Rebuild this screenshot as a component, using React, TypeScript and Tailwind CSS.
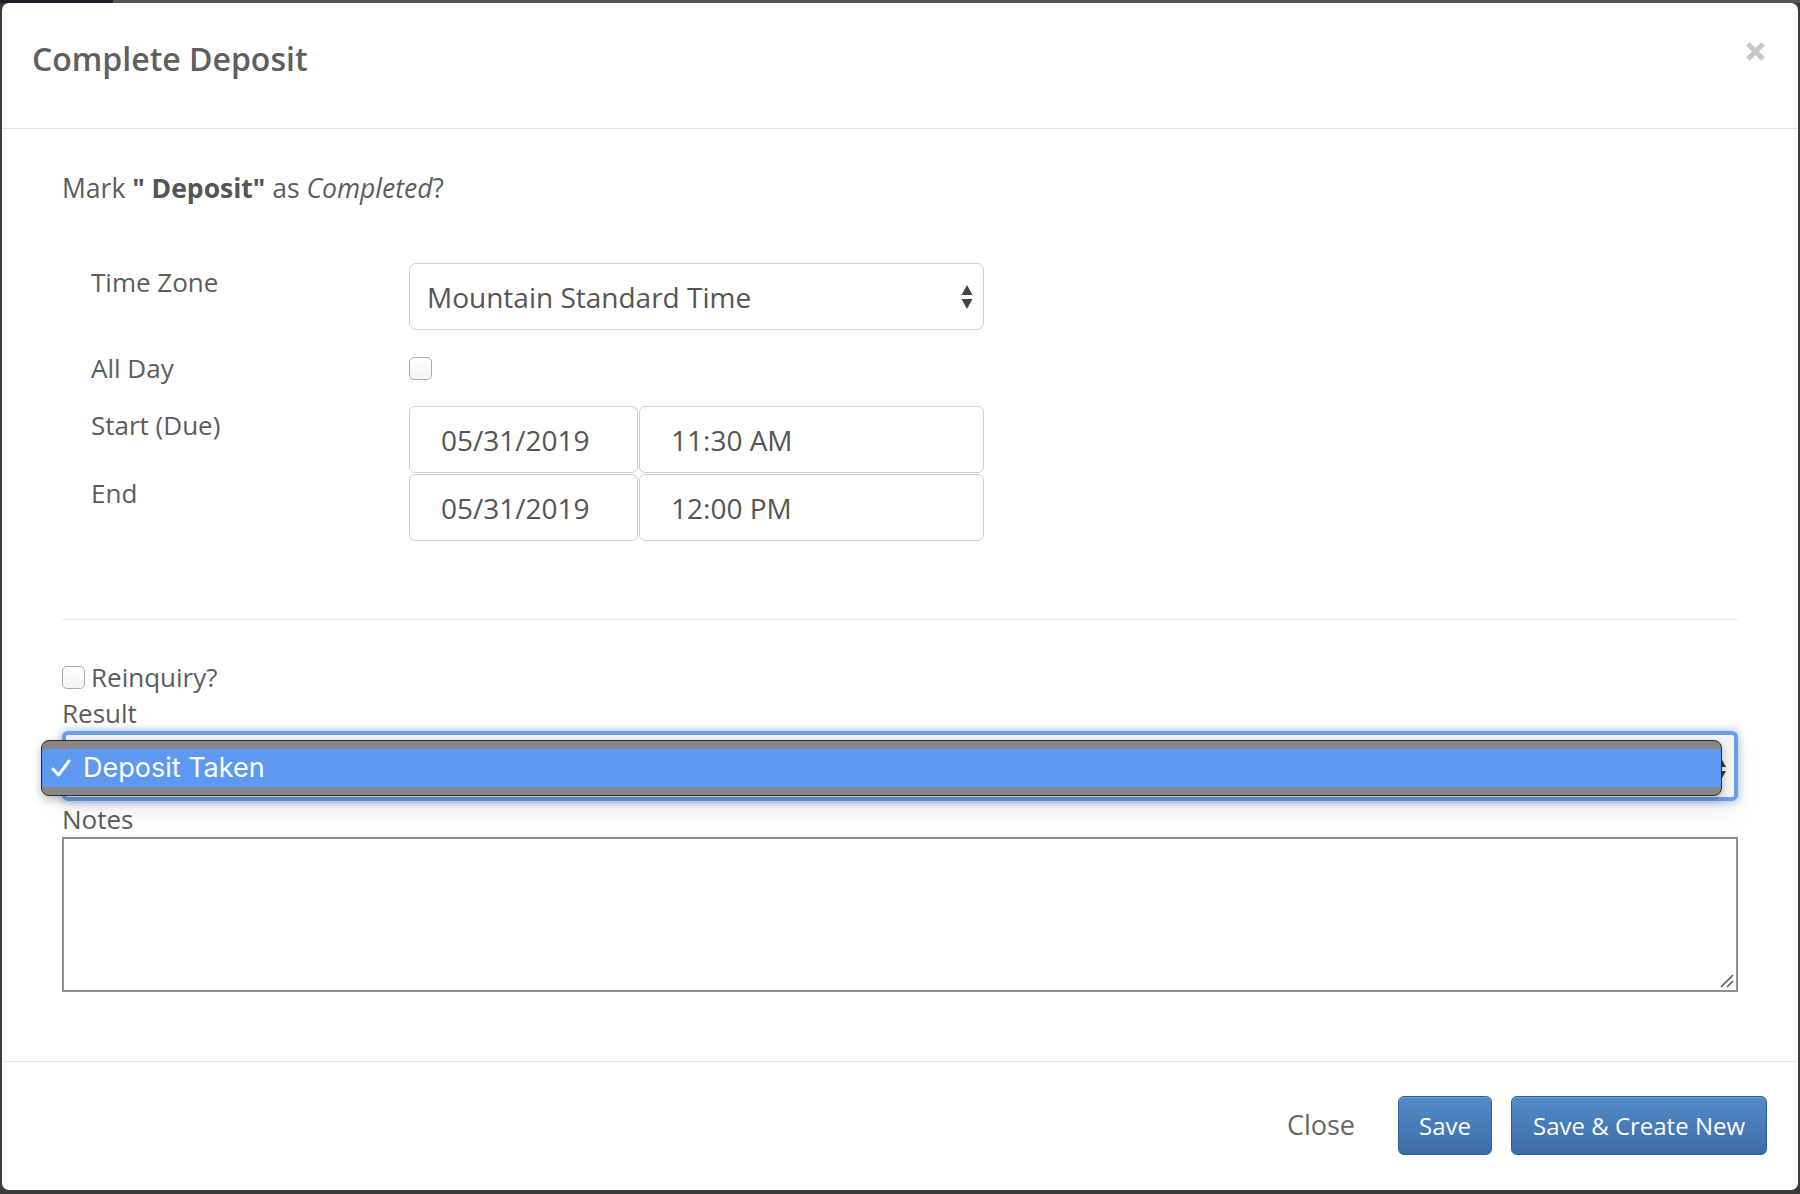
import React from 'react';

const font = { fontFamily: '"Open Sans", "Liberation Sans", sans-serif' };

const Arrows = ({ className }: { className?: string }) => (
  <svg width="12" height="26" viewBox="0 0 12 26" className={className}>
    <path d="M6 1 L11.5 11 L0.5 11 Z" fill="#444" />
    <path d="M6 25 L11.5 15 L0.5 15 Z" fill="#444" />
  </svg>
);

const Checkbox = () => (
  <span className="inline-block w-[23px] h-[23px] rounded-[5px] border border-[#a8a8a8] bg-gradient-to-b from-white to-[#f4f4f4] shrink-0" />
);

const FormRow = ({ label, children, className }: { label: string; children: React.ReactNode; className?: string }) => (
  <div className={`flex ${className ?? ''}`}>
    <div className="w-[347px] pl-[29px] text-[26px] leading-[38px] text-[#5c5c5c]">{label}</div>
    <div>{children}</div>
  </div>
);

const TextBox = ({ value, width }: { value: string; width: string }) => (
  <div className={`${width} h-[67px] border border-[#cfcfcf] rounded-[6px] flex items-center pl-[31px] text-[28px] text-[#555]`}>
    {value}
  </div>
);

export default function App() {
  return (
    <div className="w-[1800px] h-[1194px] bg-[#3b3b3b] overflow-hidden" style={font}>
      <div className="flex h-[3px]">
        <div className="w-[113px] bg-[#1b2027]" />
        <div className="flex-1 bg-[#565656]" />
      </div>
      <div className="ml-[2px] w-[1796px] h-[1187px] bg-white rounded-[7px] flex flex-col relative">
        {/* header */}
        <div className="h-[126px] pt-[33px] px-[30px] border-b border-[#e5e5e5] relative">
          <h4 className="text-[32px] leading-[45px] font-semibold text-[#5f5f5f]">Complete Deposit</h4>
          <button className="absolute right-[33px] top-[39px] w-[19px] h-[19px]">
            <svg width="19" height="19" viewBox="0 0 19 19">
              <path d="M2 2 L17 17 M17 2 L2 17" stroke="#c8c8c8" strokeWidth="5" />
            </svg>
          </button>
        </div>

        {/* body */}
        <div className="px-[60px] pt-[40px] flex-1">
          <p className="text-[26.5px] leading-[38px] text-[#5c5c5c]">
            Mark <b className="font-bold text-[#555]">" Deposit"</b> as <i>Completed</i>?
          </p>

          <div className="mt-[56px] flex flex-col">
            <FormRow label="Time Zone">
              <div className="w-[575px] h-[67px] border border-[#cfcfcf] rounded-[7px] flex items-center justify-between pl-[17px] pr-[10px] text-[28px] text-[#555]">
                <span>Mountain Standard Time</span>
                <Arrows />
              </div>
            </FormRow>
            <FormRow label="All Day" className="mt-[19px]">
              <div className="h-[38px] flex items-center">
                <Checkbox />
              </div>
            </FormRow>
            <FormRow label="Start (Due)" className="mt-[19px]">
              <div className="flex gap-[1px]">
                <TextBox value="05/31/2019" width="w-[229px]" />
                <TextBox value="11:30 AM" width="w-[345px]" />
              </div>
            </FormRow>
            <FormRow label="End" className="mt-[1px]">
              <div className="flex gap-[1px]">
                <TextBox value="05/31/2019" width="w-[229px]" />
                <TextBox value="12:00 PM" width="w-[345px]" />
              </div>
            </FormRow>
          </div>

          <div className="mt-[78px] border-t border-[#e8e8e8]" />

          <div className="mt-[39px] flex items-center gap-[6px] h-[36px] text-[26px] text-[#5c5c5c]">
            <Checkbox />
            <span>Reinquiry?</span>
          </div>
          <div className="text-[26px] leading-[36px] text-[#5c5c5c]">Result</div>

          {/* focused select with native popup open */}
          <div className="relative h-[70px] rounded-[6px] border-[4px] border-[#6b9de6] bg-[#f4f4f4] shadow-[0_0_6px_2px_rgba(102,160,240,0.45),0_10px_24px_rgba(0,0,0,0.08)]">
            <div className="absolute right-[8px] top-[22px]">
              <svg width="11" height="24" viewBox="0 0 11 24">
                <path d="M5.5 0 L11 10 L0 10 Z" fill="#3a3a3a" />
                <path d="M5.5 24 L11 14 L0 14 Z" fill="#3a3a3a" />
              </svg>
            </div>
            <div className="absolute left-[-25px] top-[5px] w-[1681px] h-[56px] rounded-[8px] border border-[#2c2c2c] bg-[#878787] overflow-hidden shadow-[0_4px_10px_rgba(0,0,0,0.25)] flex flex-col justify-center">
              <div className="h-[38px] bg-[#5e99f1] flex items-center pl-[8px] text-white text-[27px]" style={{ fontFamily: 'Inter, "Liberation Sans", sans-serif' }}>
                <svg width="20" height="18" viewBox="0 0 20 18" className="mr-[12px] ml-[1px]">
                  <path d="M2 10 L7.5 16 L18 2" stroke="#fff" strokeWidth="3" fill="none" strokeLinecap="round" strokeLinejoin="round" />
                </svg>
                <span>Deposit Taken</span>
              </div>
            </div>
          </div>

          <div className="text-[26px] leading-[36px] text-[#5c5c5c]">Notes</div>
          <div className="relative h-[155px] border-2 border-[#8e8e8e] bg-white">
            <svg width="14" height="14" viewBox="0 0 14 14" className="absolute right-[2px] bottom-[2px]">
              <path d="M1 13 L13 1 M7 13 L13 7" stroke="#555" strokeWidth="1.5" />
            </svg>
          </div>
        </div>

        {/* footer */}
        <div className="h-[129px] border-t border-[#e5e5e5] flex items-start justify-end pt-[34px] pr-[31px]">
          <button className="h-[59px] px-[10px] mr-[33px] text-[27px] text-[#666]">Close</button>
          <button className="h-[59px] w-[94px] rounded-[6px] border border-[#2f5e93] bg-gradient-to-b from-[#538bca] to-[#3c6ca6] text-white text-[24px] shadow-[inset_0_1px_0_rgba(255,255,255,0.2)]">
            Save
          </button>
          <button className="ml-[19px] h-[59px] w-[256px] rounded-[6px] border border-[#2f5e93] bg-gradient-to-b from-[#538bca] to-[#3c6ca6] text-white text-[24px] shadow-[inset_0_1px_0_rgba(255,255,255,0.2)]">
            Save &amp; Create New
          </button>
        </div>
      </div>
    </div>
  );
}
